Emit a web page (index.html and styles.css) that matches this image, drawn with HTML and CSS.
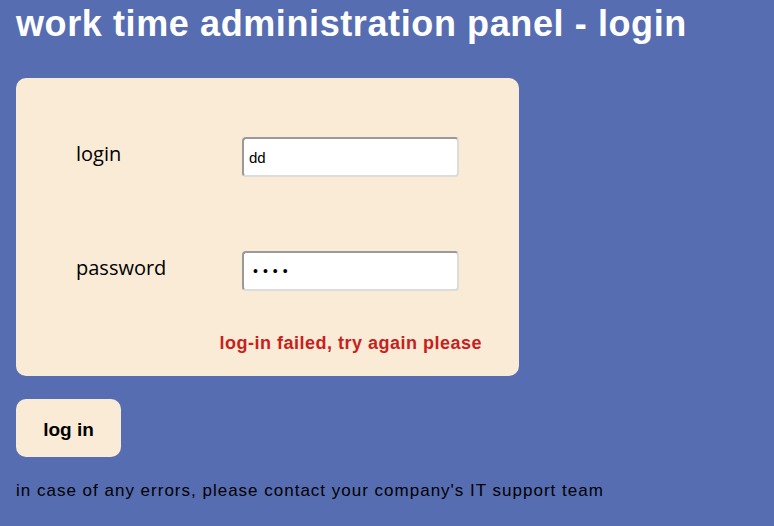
FILE: index.html
```html
<!DOCTYPE html>
<html>
<head>
<meta charset="utf-8">
<link rel="stylesheet" href="styles.css">
</head>
<body>
<h1 class="title">work time administration panel - login</h1>
<form class="panel">
  <div class="row">
    <label class="label" for="login">login</label>
    <input class="field" id="login" type="text" value="dd">
  </div>
  <div class="row">
    <label class="label" for="pw">password</label>
    <input class="field pw" id="pw" type="password" value="abcd">
  </div>
  <p class="error">log-in failed, try again please</p>
</form>
<button class="btn" type="button">log in</button>
<p class="note">in case of any errors, please contact your company's IT support team</p>
</body>
</html>
```
FILE: styles.css
```css
html, body { margin: 0; }
body {
  background: #566db2;
  padding: 0 16px;
  font-family: "Liberation Sans", Arial, sans-serif;
  color: #000;
}
.title {
  margin: 0;
  padding-top: 4px;
  height: 74px;
  font-size: 36px;
  letter-spacing: 0.6px;
  line-height: 40px;
  font-weight: bold;
  color: #fff;
}
.panel {
  width: 503px;
  height: 298px;
  box-sizing: border-box;
  background: #faebd7;
  border-radius: 10px;
  padding: 59px 37px 0 60px;
  display: flex;
  flex-direction: column;
}
.row {
  display: flex;
  align-items: center;
  height: 40px;
  margin-bottom: 74px;
}
.row + .row { margin-bottom: 0; }
.label {
  width: 166px;
  padding-bottom: 8px;
  font-family: "Open Sans", sans-serif;
  font-size: 20px;
}
.field {
  width: 217px;
  height: 40px;
  box-sizing: border-box;
  border: 2px solid;
  border-color: #9a9a9a #dcdcdc #dcdcdc #9a9a9a;
  border-radius: 4px;
  background: #fff;
  padding: 0 5px;
  font-family: "Liberation Sans", sans-serif;
  font-size: 15px;
  outline: none;
}
.field.pw {
  padding: 0 9px;
  font-size: 14px;
  letter-spacing: 5px;
}
.error {
  margin: 42px 0 0;
  text-align: right;
  color: #c8201c;
  font-weight: bold;
  font-size: 18px;
  letter-spacing: 0.5px;
}
.btn {
  display: block;
  margin-top: 23px;
  width: 105px;
  height: 58px;
  padding-top: 4px;
  border: none;
  border-radius: 10px;
  background: #faebd7;
  font-family: "Liberation Sans", sans-serif;
  font-weight: bold;
  font-size: 19px;
  color: #000;
}
.note {
  margin: 24px 0 0;
  font-size: 17px;
  letter-spacing: 1px;
}
```
